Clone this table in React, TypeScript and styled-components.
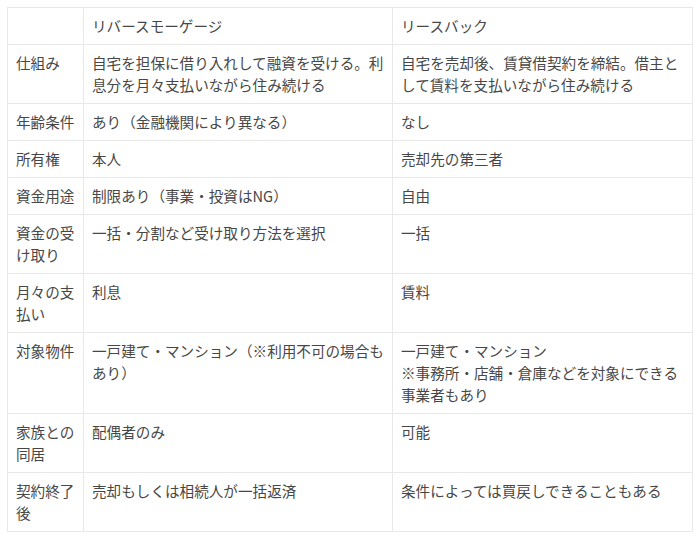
import React from "react";
import styled, { createGlobalStyle } from "styled-components";

const Global = createGlobalStyle`
  html, body { margin: 0; padding: 0; background: #fff; }
  body {
    font-family: "Noto Sans CJK JP", "Noto Sans", sans-serif;
    color: #444;
  }
`;

const Wrap = styled.div`
  padding: 7px 8px 0 7px;
`;

const Table = styled.table`
  border-collapse: collapse;
  table-layout: fixed;
  width: 685px;
  font-size: 14.6px;
  line-height: 22px;
`;

const Cell = styled.td`
  border: 1px solid #e8e8e8;
  padding: 7px 8px 7px 8px;
  vertical-align: top;
  text-align: left;
  color: #474747;
  font-weight: normal;
  word-break: break-all;
`;

const HeadCell = styled(Cell).attrs({ as: "th" })``;

const rows: [string, string, string][] = [
  ["仕組み", "自宅を担保に借り入れして融資を受ける。利息分を月々支払いながら住み続ける", "自宅を売却後、賃貸借契約を締結。借主として賃料を支払いながら住み続ける"],
  ["年齢条件", "あり（金融機関により異なる）", "なし"],
  ["所有権", "本人", "売却先の第三者"],
  ["資金用途", "制限あり（事業・投資はNG）", "自由"],
  ["資金の受け取り", "一括・分割など受け取り方法を選択", "一括"],
  ["月々の支払い", "利息", "賃料"],
  ["対象物件", "一戸建て・マンション（※利用不可の場合もあり）", "一戸建て・マンション\n※事務所・店舗・倉庫などを対象にできる事業者もあり"],
  ["家族との同居", "配偶者のみ", "可能"],
  ["契約終了後", "売却もしくは相続人が一括返済", "条件によっては買戻しできることもある"],
];

const Multi: React.FC<{ text: string }> = ({ text }) => {
  const parts = text.split("\n");
  return (
    <>
      {parts.map((p, i) => (
        <React.Fragment key={i}>
          {i > 0 && <br />}
          {p}
        </React.Fragment>
      ))}
    </>
  );
};

export default function App() {
  return (
    <>
      <Global />
      <Wrap>
        <Table>
          <colgroup>
            <col style={{ width: 76 }} />
            <col style={{ width: 309 }} />
            <col style={{ width: 300 }} />
          </colgroup>
          <thead>
            <tr>
              <HeadCell></HeadCell>
              <HeadCell>リバースモーゲージ</HeadCell>
              <HeadCell>リースバック</HeadCell>
            </tr>
          </thead>
          <tbody>
            {rows.map((r, i) => (
              <tr key={i}>
                <Cell>{r[0]}</Cell>
                <Cell><Multi text={r[1]} /></Cell>
                <Cell><Multi text={r[2]} /></Cell>
              </tr>
            ))}
          </tbody>
        </Table>
      </Wrap>
    </>
  );
}
